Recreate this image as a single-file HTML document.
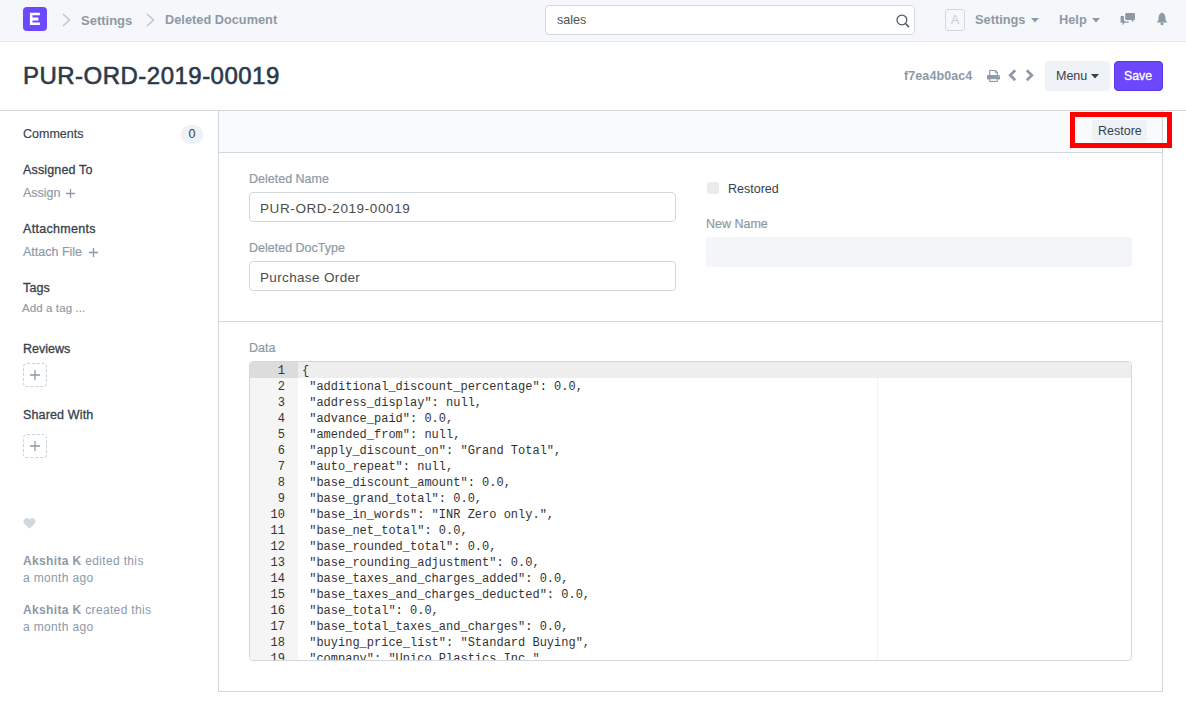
<!DOCTYPE html>
<html><head><meta charset="utf-8">
<style>
*{box-sizing:border-box;margin:0;padding:0}
html,body{width:1186px;height:707px;overflow:hidden;background:#fff;font-family:"Liberation Sans",sans-serif;color:#36414c}
.a{position:absolute;white-space:nowrap}
#nav{position:absolute;left:0;top:0;width:1186px;height:42px;background:#f5f7fa;border-bottom:1px solid #e4e9ee}
.logo{left:23px;top:7px;width:24px;height:24px;background:#6e4cfb;border-radius:5px;color:#fff;font-weight:bold;font-size:16px;text-align:center;line-height:24px}
.crumb{font-weight:bold;font-size:13px;color:#8d99a6}
.muted{color:#8d99a6}
.search{left:545px;top:5px;width:370px;height:30px;border:1px solid #d1d8dd;border-radius:4px;background:#fff}
.hline{position:absolute;height:1px;background:#d1d8dd}
.vline{position:absolute;width:1px;background:#d1d8dd}
.btn{border-radius:4px}
.sb-h{font-size:12.5px;letter-spacing:0.15px;-webkit-text-stroke:0.3px #36414c;color:#36414c}
.sb-l{font-size:12.5px;color:#8d99a6;-webkit-text-stroke:0.15px #8d99a6}
.act{font-size:12px;letter-spacing:0.35px;color:#8d99a6}
.lbl{font-size:12.5px;color:#8d99a6;-webkit-text-stroke:0.2px #8d99a6}
.inp{border:1px solid #d1d8dd;border-radius:4px;background:#fff;height:30px}
.dash{width:24px;height:24px;border:1px dashed #c9d1d8;border-radius:4px}
.code{font-family:"Liberation Mono",monospace;font-size:12px;color:#333}
</style></head><body>
<div id="nav"></div>
<svg class="a" style="left:23px;top:7px" width="24" height="24" viewBox="0 0 24 24"><rect x="0" y="0" width="24" height="24" rx="4" fill="#6c48ff"/><path d="M6.9 5.7 H16.9 V8.3 H9.5 V10.6 H15.4 V13.4 H9.5 V15.4 H16.9 V18 H6.9Z" fill="#fff"/></svg>
<svg class="a" style="left:62px;top:13px" width="9" height="14" viewBox="0 0 9 14"><path d="M1 1 L7.5 7 L1 13" fill="none" stroke="#c0c9d1" stroke-width="1.7"/></svg>
<div class="a crumb" style="left:81px;top:13px">Settings</div>
<svg class="a" style="left:146px;top:13px" width="9" height="14" viewBox="0 0 9 14"><path d="M1 1 L7.5 7 L1 13" fill="none" stroke="#c0c9d1" stroke-width="1.7"/></svg>
<div class="a crumb" style="left:165px;top:13px;font-size:12.7px;letter-spacing:0.05px">Deleted Document</div>
<div class="a search"></div>
<div class="a" style="left:557px;top:13px;font-size:12.6px;color:#505050">sales</div>
<svg class="a" style="left:896px;top:14px" width="14" height="14" viewBox="0 0 14 14"><circle cx="5.9" cy="5.9" r="4.9" fill="none" stroke="#4f5a63" stroke-width="1.25"/><path d="M9.5 9.5 L12.6 12.6" stroke="#4f5a63" stroke-width="1.5" stroke-linecap="round"/></svg>
<div class="a" style="left:945px;top:9px;width:20px;height:22px;border:1px solid #d1d8dd;border-radius:3px;color:#c8d0d7;font-size:13px;text-align:center;line-height:20px">A</div>
<div class="a crumb" style="left:975px;top:12px;font-size:12.8px">Settings</div>
<svg class="a" style="left:1031px;top:18px" width="8" height="5"><path d="M0 0 L8 0 L4 4.5Z" fill="#8d99a6"/></svg>
<div class="a crumb" style="left:1059px;top:12px;font-size:12.8px">Help</div>
<svg class="a" style="left:1092px;top:18px" width="8" height="5"><path d="M0 0 L8 0 L4 4.5Z" fill="#8d99a6"/></svg>
<svg class="a" style="left:1120px;top:13px" width="15" height="13" viewBox="0 0 15 13"><path d="M6.2 0 h7.8 a1 1 0 0 1 1 1 v5 a1 1 0 0 1 -1 1 h-0.8 l0.2 2.4 l-2.4 -2.4 h-4.8 a1 1 0 0 1 -1 -1 v-5 a1 1 0 0 1 1 -1z" fill="#8d99a6"/><path d="M0.6 3 h3.3 v3.8 a1.6 1.6 0 0 0 1.6 1.6 h3.4 v0.7 a0.7 0.7 0 0 1 -0.7 0.7 h-3.6 l-2.4 2.6 l0.4 -2.6 h-1.4 a0.6 0.6 0 0 1 -0.6 -0.6 v-5.6 a0.6 0.6 0 0 1 0.6 -0.6z" fill="#8d99a6"/></svg>
<svg class="a" style="left:1156px;top:12px" width="12" height="14" viewBox="0 0 12 14"><path d="M6 1.3 C3.6 1.3 2.6 3.3 2.6 6 C2.6 8.4 1.7 9.6 0.6 10.6 L11.4 10.6 C10.3 9.6 9.4 8.4 9.4 6 C9.4 3.3 8.4 1.3 6 1.3Z" fill="#8d99a6"/><path d="M4.5 10.5 h3 v1.2 a1.5 1.5 0 0 1 -3 0z" fill="#8d99a6"/><circle cx="6" cy="1.6" r="1" fill="#8d99a6"/></svg>

<!-- title row -->
<div class="a" style="left:23px;top:62px;font-size:24px;color:#2c3a48;letter-spacing:0.48px;-webkit-text-stroke:0.6px #2c3a48">PUR-ORD-2019-00019</div>
<div class="a muted" style="left:904px;top:69px;font-size:12.5px;font-weight:bold;letter-spacing:0.1px">f7ea4b0ac4</div>
<svg class="a" style="left:987px;top:70px" width="13" height="12" viewBox="0 0 13 12"><path d="M2.7 5.2 V0.55 H8.4 L10.35 2.5 V5.2" fill="none" stroke="#8d99a6" stroke-width="1.1"/><path d="M8.3 0.6 V2.6 H10.3" fill="none" stroke="#8d99a6" stroke-width="0.9"/><rect x="0" y="5" width="13" height="4.6" rx="0.8" fill="#8d99a6"/><circle cx="11.6" cy="6.4" r="0.55" fill="#e6eaee"/><rect x="2.75" y="8.65" width="7.55" height="2.8" fill="#fff" stroke="#8d99a6" stroke-width="1.1"/></svg><svg class="a" style="left:1008px;top:69px" width="9" height="13" viewBox="0 0 9 13"><path d="M7.2 1.2 L2.2 6.2 L7.2 11.2" fill="none" stroke="#8d99a6" stroke-width="2.7"/></svg><svg class="a" style="left:1024px;top:69px" width="10" height="13" viewBox="0 0 10 13"><path d="M2.8 1.2 L7.8 6.2 L2.8 11.2" fill="none" stroke="#8d99a6" stroke-width="2.7"/></svg>
<div class="a btn" style="left:1045px;top:61px;width:65px;height:30px;background:#eff2f6"></div>
<div class="a" style="left:1056px;top:69px;font-size:12.5px;color:#36414c">Menu</div>
<svg class="a" style="left:1091px;top:74px" width="8" height="5"><path d="M0 0 L8 0 L4 4.5Z" fill="#36414c"/></svg>
<div class="a btn" style="left:1114px;top:61px;width:49px;height:30px;background:#6c47fb;border:1px solid #5b36ea"></div>
<div class="a" style="left:1124px;top:69px;font-size:12.3px;color:#fff;letter-spacing:0px;-webkit-text-stroke:0.3px #fff">Save</div>

<div class="hline" style="left:0;top:110px;width:1186px"></div>

<!-- sidebar -->
<div class="a" style="left:23px;top:127px;font-size:12.5px;color:#36414c;-webkit-text-stroke:0.15px #36414c">Comments</div>
<div class="a" style="left:181px;top:125px;width:22px;height:19px;border-radius:10px;background:#eef1f5;font-size:12px;text-align:center;line-height:19px;color:#36414c;font-size:12.5px">0</div>
<div class="a sb-h" style="left:23px;top:163px">Assigned To</div>
<div class="a sb-l" style="left:23px;top:186px">Assign</div><svg class="a" style="left:66px;top:189px" width="9" height="9" viewBox="0 0 9 9"><path d="M4.5 0 V9 M0 4.5 H9" stroke="#8d99a6" stroke-width="1.3"/></svg>
<div class="a sb-h" style="left:23px;top:222px;letter-spacing:0.3px">Attachments</div>
<div class="a sb-l" style="left:23px;top:245px">Attach File</div><svg class="a" style="left:89px;top:248px" width="9" height="9" viewBox="0 0 9 9"><path d="M4.5 0 V9 M0 4.5 H9" stroke="#8d99a6" stroke-width="1.3"/></svg>
<div class="a sb-h" style="left:23px;top:281px">Tags</div>
<div class="a sb-l" style="left:22px;top:302px;font-size:11.5px;letter-spacing:0.1px">Add a tag ...</div>
<div class="a sb-h" style="left:23px;top:342px;letter-spacing:0px">Reviews</div>
<div class="a dash" style="left:23px;top:363px"></div><svg class="a" style="left:30px;top:370px" width="10" height="10" viewBox="0 0 10 10"><path d="M5 0 V10 M0 5 H10" stroke="#8d99a6" stroke-width="1.3"/></svg>
<div class="a sb-h" style="left:23px;top:408px">Shared With</div>
<div class="a dash" style="left:23px;top:434px"></div><svg class="a" style="left:30px;top:441px" width="10" height="10" viewBox="0 0 10 10"><path d="M5 0 V10 M0 5 H10" stroke="#8d99a6" stroke-width="1.3"/></svg>
<svg class="a" style="left:23px;top:518px" width="13" height="11" viewBox="0 0 13 11"><path d="M6.5 10.8 L1.2 5.6 A3 3 0 0 1 6.5 1.6 A3 3 0 0 1 11.8 5.6Z" fill="#d1d8dd"/></svg>
<div class="a act" style="left:23px;top:554px"><b>Akshita K</b> edited this</div>
<div class="a act" style="left:23px;top:571px">a month ago</div>
<div class="a act" style="left:23px;top:603px"><b>Akshita K</b> created this</div>
<div class="a act" style="left:23px;top:620px">a month ago</div>

<!-- main form -->
<div class="a" style="left:218px;top:110px;width:945px;height:582px;border:1px solid #d1d8dd;border-top:none"></div>
<div class="a" style="left:219px;top:111px;width:943px;height:41px;background:#f9fafb"></div>
<div class="hline" style="left:218px;top:152px;width:945px"></div>
<div class="a btn" style="left:1092px;top:120px;width:55px;height:22px;background:#eef1f5;border-radius:4px"></div>
<div class="a" style="left:1098px;top:124px;font-size:12.5px;color:#36414c">Restore</div>
<div class="a" style="left:1070px;top:112px;width:102px;height:36px;border:5px solid #ff0000"></div>

<div class="a lbl" style="left:249px;top:172px">Deleted Name</div>
<div class="a inp" style="left:249px;top:192px;width:427px"></div>
<div class="a" style="left:260px;top:201px;font-size:13.5px;color:#4c4c4c;letter-spacing:0.6px">PUR-ORD-2019-00019</div>
<div class="a lbl" style="left:249px;top:241px">Deleted DocType</div>
<div class="a inp" style="left:249px;top:261px;width:427px"></div>
<div class="a" style="left:260px;top:270px;font-size:13.5px;color:#4c4c4c;letter-spacing:0.35px">Purchase Order</div>

<div class="a" style="left:707px;top:182px;width:12px;height:12px;background:#ebebeb;border-radius:2px"></div>
<div class="a" style="left:728px;top:182px;font-size:12.5px;color:#36414c">Restored</div>
<div class="a lbl" style="left:706px;top:217px">New Name</div>
<div class="a" style="left:706px;top:237px;width:426px;height:30px;background:#f4f5f8;border-radius:4px"></div>

<div class="hline" style="left:218px;top:321px;width:945px"></div>
<div class="a lbl" style="left:249px;top:341px">Data</div>

<div id="editor" class="a" style="left:249px;top:361px;width:883px;height:300px;border:1px solid #d1d8dd;border-radius:4px;overflow:hidden;background:#fff">
<div class="a" style="left:0;top:0;width:48px;height:300px;background:#f5f5f5"></div>
<div class="a" style="left:0;top:0;width:48px;height:16px;background:#dcdcdc"></div>
<div class="a" style="left:48px;top:0;width:835px;height:16px;background:#eeeeee"></div>
<div class="a" style="left:627px;top:16px;width:1px;height:290px;background:#f2f2f2"></div>
<div class="a code gut" style="left:0;top:1px;width:35px;text-align:right;line-height:16px"><div>1</div><div>2</div><div>3</div><div>4</div><div>5</div><div>6</div><div>7</div><div>8</div><div>9</div><div>10</div><div>11</div><div>12</div><div>13</div><div>14</div><div>15</div><div>16</div><div>17</div><div>18</div><div>19</div><div>20</div></div>
<div class="a code txt" style="left:52px;top:1px;line-height:16px;white-space:pre"><div>{</div><div> &quot;additional_discount_percentage&quot;: 0.0,</div><div> &quot;address_display&quot;: null,</div><div> &quot;advance_paid&quot;: 0.0,</div><div> &quot;amended_from&quot;: null,</div><div> &quot;apply_discount_on&quot;: &quot;Grand Total&quot;,</div><div> &quot;auto_repeat&quot;: null,</div><div> &quot;base_discount_amount&quot;: 0.0,</div><div> &quot;base_grand_total&quot;: 0.0,</div><div> &quot;base_in_words&quot;: &quot;INR Zero only.&quot;,</div><div> &quot;base_net_total&quot;: 0.0,</div><div> &quot;base_rounded_total&quot;: 0.0,</div><div> &quot;base_rounding_adjustment&quot;: 0.0,</div><div> &quot;base_taxes_and_charges_added&quot;: 0.0,</div><div> &quot;base_taxes_and_charges_deducted&quot;: 0.0,</div><div> &quot;base_total&quot;: 0.0,</div><div> &quot;base_total_taxes_and_charges&quot;: 0.0,</div><div> &quot;buying_price_list&quot;: &quot;Standard Buying&quot;,</div><div> &quot;company&quot;: &quot;Unico Plastics Inc.&quot;,</div><div> &quot;contact_display&quot;: null,</div></div>
</div>
</body></html>
